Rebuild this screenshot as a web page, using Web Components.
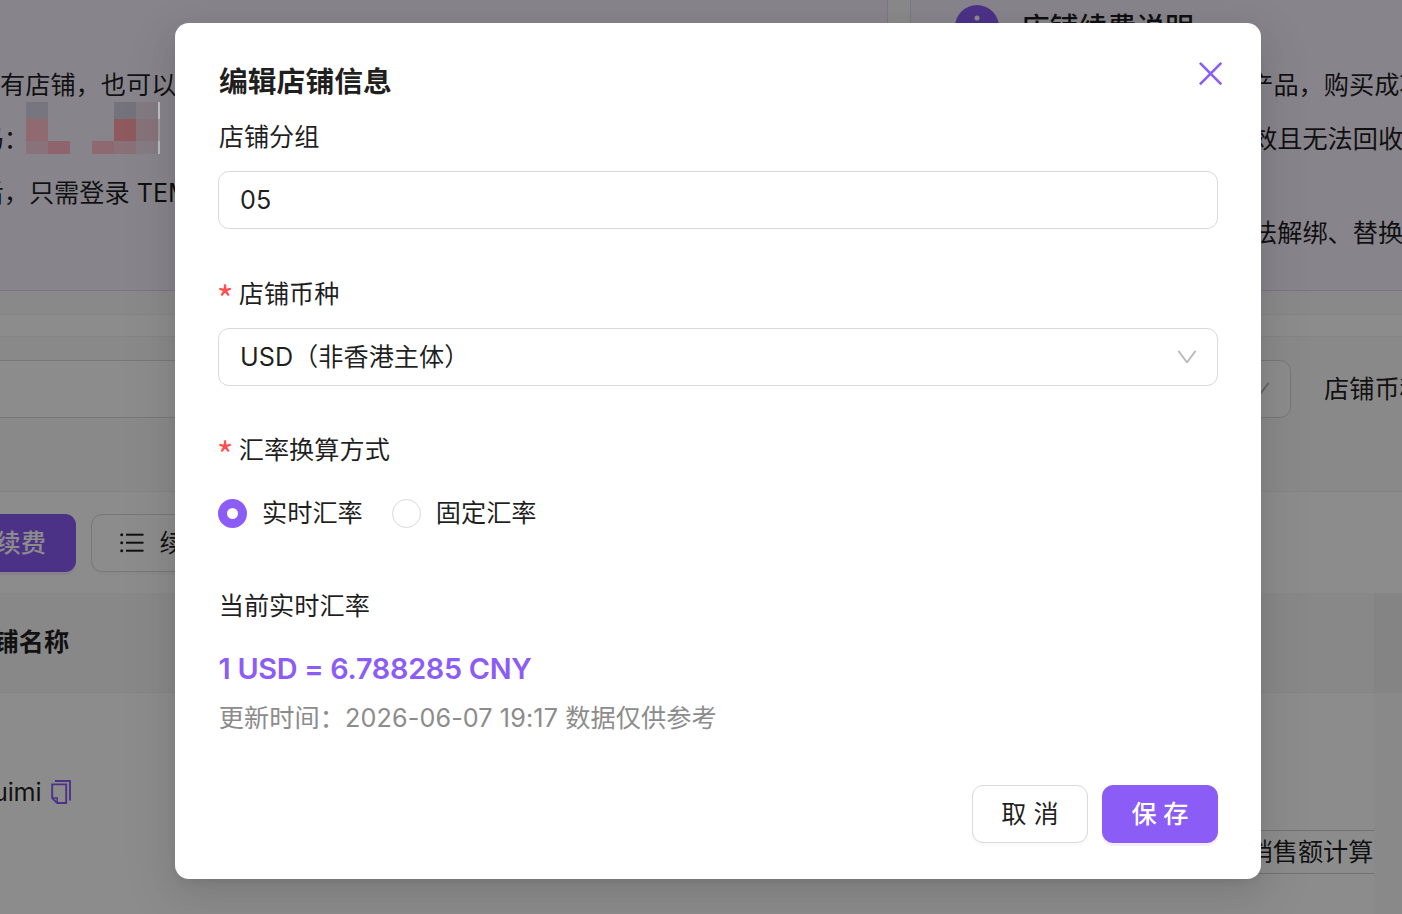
<!DOCTYPE html>
<html lang="zh-CN">
<head>
<meta charset="utf-8">
<title>编辑店铺信息</title>
<style>
html,body{margin:0;height:100%;overflow:hidden;background:#fff}
body{font-family:Inter,"Noto Sans CJK SC",sans-serif;font-size:25.2px;color:rgba(0,0,0,.88);--brand:#8b5cf6}
</style>
</head>
<body>
<shop-app></shop-app>
<script>
function define(name, html, setup){
  const t=document.createElement('template');
  t.innerHTML=html;
  customElements.define(name,class extends HTMLElement{
    constructor(){super();this.attachShadow({mode:'open'}).append(t.content.cloneNode(true));}
    connectedCallback(){if(setup)setup(this,this.shadowRoot);}
  });
}

define('ui-icon',`<style>:host{display:block;flex:none}svg{display:block;width:100%;height:100%;overflow:visible}</style><div id="i" style="height:100%"></div>`,(el,r)=>{
  const icons={
    close:'<svg viewBox="0 0 24 24" fill="none" stroke="currentColor" stroke-width="2.6" stroke-linecap="butt"><path d="M.9 .9 22.3 22.3M22.3 .9 .9 22.3"/></svg>',
    down:'<svg viewBox="0 0 18 14" fill="none" stroke="currentColor" stroke-width="1.8" stroke-linejoin="round"><path d="M.4 .9 9 12.4 17.6 .9"/></svg>',
    list:'<svg viewBox="0 0 24 20" fill="currentColor"><circle cx="1.7" cy="1.700" r="1.5"/><circle cx="1.7" cy="9.700" r="1.5"/><circle cx="1.7" cy="17.700" r="1.5"/><rect x="6" y=".7" width="17.5" height="2"/><rect x="6" y="8.7" width="17.5" height="2"/><rect x="6" y="16.7" width="17.5" height="2"/></svg>',
    copy:'<svg viewBox="0 0 20 24" fill="none" stroke="currentColor" stroke-width="1.9"><path d="M4 1H19V20.500"/><path d="M1.200 4.400H15.200V23H6.200L1.200 18.200Z"/><path d="M1.200 18H6.200V23" stroke-width="1.5"/></svg>',
    info:'<svg viewBox="0 0 44 44"><circle cx="22" cy="22" r="22" fill="currentColor"/><circle cx="22" cy="13" r="2.5" fill="#fff"/><rect x="20" y="18.500" width="4" height="15" fill="#fff"/></svg>'
  };
  r.getElementById('i').innerHTML=icons[el.getAttribute('name')];
});

define('ui-button',`<style>
:host{display:flex;align-items:center;box-sizing:border-box;height:58px;line-height:56px;border:1px solid #d9d9d9;border-radius:11px;background:#fff;box-shadow:0 3px 0 rgba(0,0,0,.02);white-space:nowrap;flex:none}
:host([primary]){background:var(--brand);border-color:var(--brand);color:#fff;box-shadow:0 3px 0 rgba(139,60,246,.09);font-weight:500}
:host([dialog]){width:116px;justify-content:center}
</style><slot></slot>`);

define('ui-field',`<style>
:host{display:flex;align-items:center;justify-content:space-between;box-sizing:border-box;height:58px;line-height:57px;border:1px solid #d9d9d9;border-radius:11px;background:#fff;padding:0 21px 0 21px;white-space:nowrap;flex:none}
ui-icon{width:18px;height:14px;color:rgba(0,0,0,.27)}
</style><span><slot></slot></span><ui-icon name="down" id="d"></ui-icon>`,(el,r)=>{if(!el.hasAttribute('select'))r.getElementById('d').remove();});

define('form-item',`<style>
:host{display:flow-root}
.l{display:flex;height:40px;line-height:40px;margin-bottom:14px;padding-left:.7px;white-space:nowrap}
.s{display:none;color:#ff4d4f;width:20px;font-family:"Noto Sans CJK SC",sans-serif;font-size:36px;line-height:46px;margin-left:-2px;margin-right:2px}
:host([required]) .s{display:block}
</style><div class="l"><span class="s">*</span><span id="t"></span></div><slot></slot>`,(el,r)=>{r.getElementById('t').textContent=el.getAttribute('label');});

define('ui-radio',`<style>
:host{display:flex;align-items:center;gap:15px;white-space:nowrap;line-height:58px}
i{box-sizing:border-box;width:29px;height:29px;border-radius:50%;border:1px solid #d9d9d9;background:#fff}
:host([checked]) i{border:9px solid var(--brand)}
</style><i></i><span><slot></slot></span>`);

define('notice-card',`<style>
:host{display:block;box-sizing:border-box;background:#f6f0fd;border:1px solid #e0d6ff;border-top:0;overflow:hidden;white-space:nowrap}
</style><slot></slot>`);

define('shop-page',`<style>
:host{display:flex;flex-direction:column;height:914px;background:#fff;overflow:hidden;white-space:nowrap}
.notices{display:grid;grid-template-columns:888px 500px;column-gap:22px;height:291px;background:#fafafa;flex:none}
.left{border-left:0;padding-top:58px}
p{margin:0;height:54px;line-height:54px}
.cut{text-indent:-21.500px}
.head{display:flex;gap:24px;height:44px;line-height:45px;padding:5px 0 0 44px;font-size:28.8px;font-weight:500}
.head span{margin-left:-2px}
.head ui-icon{width:44px;height:44px}
.right p{padding-left:341px}
.right p:first-of-type{margin-top:9px;padding-left:337.200px}
.right p:last-of-type{margin-top:40px}
.gap{height:23px;background:#fafafa;border-bottom:1px solid #f0f0f0;flex:none}
.strip{height:21px;border-bottom:1px solid #f0f0f0;flex:none}
.filters{display:flex;height:131px;padding-top:23px;background:#fafafa;border-bottom:1px solid #f0f0f0;flex:none}
.filters ui-field{border-left:0;border-radius:0 11px 11px 0;width:620px}
.filters ui-field[select]{width:591px;margin:0 33px 0 80px;border-left:1px solid #d9d9d9;border-radius:11px}
.filters span{line-height:58px}
.tools{display:flex;gap:15px;height:79px;padding-top:22px;flex:none}
.tools ui-button[primary]{width:76px;border-radius:0 11px 11px 0;border-left:0}
.tools ui-button[primary] span{margin-left:-4.500px}
.tools ui-button:last-child{padding:0 28px 0 28px}
.tools ui-icon{width:24px;height:20px;margin-right:15.500px}
.table{display:grid;grid-template-columns:1374px 28px;grid-template-rows:100px 221px;flex:none}
.th{background:#f8f8f8;border-bottom:1px solid #f0f0f0;box-sizing:border-box;font-weight:700;line-height:98px}
.th span{margin-left:-6.500px}
.edge{background:#f0f0f0}.edge2{background:#fafafa}
.row{display:flex;justify-content:space-between}
.name{display:flex;gap:10px;height:200px;align-items:center;margin:-1px 0 0 -7px}
.name ui-icon{width:20px;height:24px;color:var(--brand)}
.name span{letter-spacing:-.2px}
.calc{margin-top:137px;height:42px;line-height:42px;width:126.500px;border:solid #d0d0d0;border-width:1px 0}
</style>
<div class="notices">
 <notice-card class="left"><p>有店铺，也可以</p><p class="cut">码：</p><p class="cut">后，只需登录 TEMU</p></notice-card>
 <notice-card class="right"><div class="head"><ui-icon name="info" style="color:var(--brand)"></ui-icon><span>店铺续费说明</span></div><p>产品，购买成功</p><p>效且无法回收</p><p>法解绑、替换</p></notice-card>
</div>
<div class="gap"></div><div class="strip"></div>
<div class="filters"><ui-field></ui-field><ui-field select></ui-field><span>店铺币种</span></div>
<div class="tools"><ui-button primary><span>续费</span></ui-button><ui-button><ui-icon name="list"></ui-icon>续</ui-button></div>
<div class="table"><div class="th"><span>铺名称</span></div><div class="edge"></div>
<div class="row"><div class="name"><span>uimi</span><ui-icon name="copy"></ui-icon></div><div class="calc">销售额计算</div></div><div class="edge2"></div></div>`);

define('pixel-patch',`<style>
:host{display:grid;grid-template-columns:repeat(6,22px) 2px;grid-template-rows:17px 22px 13px;width:134px;height:52px}
</style>`,(el,r)=>{
  const c=['#77757e','','','','#74737b','#827a80','#c0bfc4','#8f6a70','','','','#8e5a5e','#86737a','#9d9ba0','#89727a','#8f646c','','#8f6970','#8a7077','#857b84','#bab9be'];
  for(const v of c){const d=document.createElement('div');d.style.background=v||'transparent';r.append(d);}
});

define('shop-modal',`<style>
:host{display:block;position:relative;box-sizing:border-box;width:1086px;height:856px;border-radius:14px;background:#fff;padding:36px 43px 0;box-shadow:0 11px 29px rgba(0,0,0,.08),0 5px 11px -7px rgba(0,0,0,.12),0 16px 50px 14px rgba(0,0,0,.05)}
header{display:flex;justify-content:space-between;height:44px;line-height:45px;margin-bottom:14px;padding-left:1px;font-size:28.8px;font-weight:700}
header ui-icon{width:24px;height:24px;margin:3px -5px 0 0;color:var(--brand)}
form-item+form-item{margin-top:45px}
form-item.m{margin-top:44px}
.radios{display:flex;gap:29px;height:58px}
.rate{height:44px;line-height:44px;font-size:28.8px;font-weight:600;color:var(--brand);margin-top:21px;white-space:nowrap;letter-spacing:-.27px;padding-left:.5px}
.time{height:40px;line-height:40px;margin-top:7px;color:#8c8c8c;white-space:nowrap;letter-spacing:.1px;padding-left:.7px}
footer{display:flex;justify-content:flex-end;gap:14px;margin-top:47px}
</style>
<header><span>编辑店铺信息</span><ui-icon name="close"></ui-icon></header>
<form-item label="店铺分组"><ui-field>05</ui-field></form-item>
<form-item label="店铺币种" required><ui-field select>USD（非香港主体）</ui-field></form-item>
<form-item class="m" label="汇率换算方式" required><div class="radios"><ui-radio checked>实时汇率</ui-radio><ui-radio>固定汇率</ui-radio></div></form-item>
<form-item class="m" label="当前实时汇率"><div class="rate">1 USD = 6.788285 CNY</div><div class="time">更新时间：2026-06-07 19:17 数据仅供参考</div></form-item>
<footer><ui-button dialog>取 消</ui-button><ui-button dialog primary>保 存</ui-button></footer>`);

define('shop-app',`<style>
:host{display:block;position:relative;height:914px;width:1402px;overflow:hidden}
.mask{position:absolute;inset:0;background:rgba(0,0,0,.45);display:flex;justify-content:center;align-items:flex-start;box-sizing:border-box;padding:23px 0 0 34px}
pixel-patch{position:absolute;left:26px;top:102px}
</style><shop-page></shop-page><div class="mask"><pixel-patch></pixel-patch><shop-modal></shop-modal></div>`);
</script>
</body>
</html>
